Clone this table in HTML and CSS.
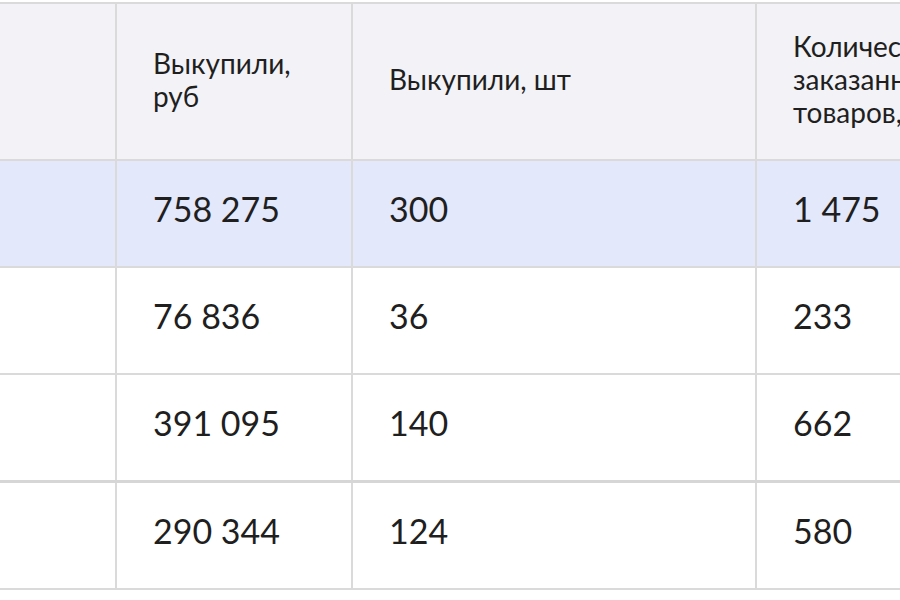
FILE: index.html
```html
<!DOCTYPE html>
<html lang="ru">
<head>
<meta charset="utf-8">
<title>Таблица</title>
<link rel="stylesheet" href="styles.css">
</head>
<body>
<div class="wrap">
<table class="stats">
  <colgroup>
    <col class="c1"><col class="c2"><col class="c3"><col class="c4">
  </colgroup>
  <thead>
    <tr>
      <th></th>
      <th>Выкупили, руб</th>
      <th>Выкупили, шт</th>
      <th>Количество заказанных товаров, шт</th>
    </tr>
  </thead>
  <tbody>
    <tr class="total">
      <td></td><td>758 275</td><td>300</td><td>1 475</td>
    </tr>
    <tr>
      <td></td><td>76 836</td><td>36</td><td>233</td>
    </tr>
    <tr>
      <td></td><td>391 095</td><td>140</td><td>662</td>
    </tr>
    <tr class="group-start">
      <td></td><td>290 344</td><td>124</td><td>580</td>
    </tr>
  </tbody>
</table>
</div>
</body>
</html>
```

FILE: styles.css
```css
html, body {
  margin: 0;
  padding: 0;
  background: #ffffff;
  overflow: hidden;
}
.wrap {
  padding-top: 2px;
  width: 1200px;
}
.stats {
  border-collapse: collapse;
  table-layout: fixed;
  font-family: Lato, "Open Sans", sans-serif;
  color: #1f1f1f;
}
.c1 { width: 116px; }
.c2 { width: 236px; }
.c3 { width: 404px; }
.c4 { width: 300px; }
.stats th,
.stats td {
  border: 2px solid #dadada;
  padding: 0 36px 0 36px;
  text-align: left;
  vertical-align: middle;
}
.stats th:first-child,
.stats td:first-child {
  border-left: none;
}
.stats th {
  background: #f3f3f7;
  font-weight: 400;
  font-size: 28px;
  line-height: 33px;
  height: 151px;
  padding-bottom: 4px;
}
.stats td {
  font-size: 34px;
  line-height: 40px;
  height: 95px;
  padding-bottom: 10px;
}
.stats .total td {
  background: #e3e8fb;
}
.stats .group-start td {
  border-top: 3px solid #d6d6d6;
}
```
